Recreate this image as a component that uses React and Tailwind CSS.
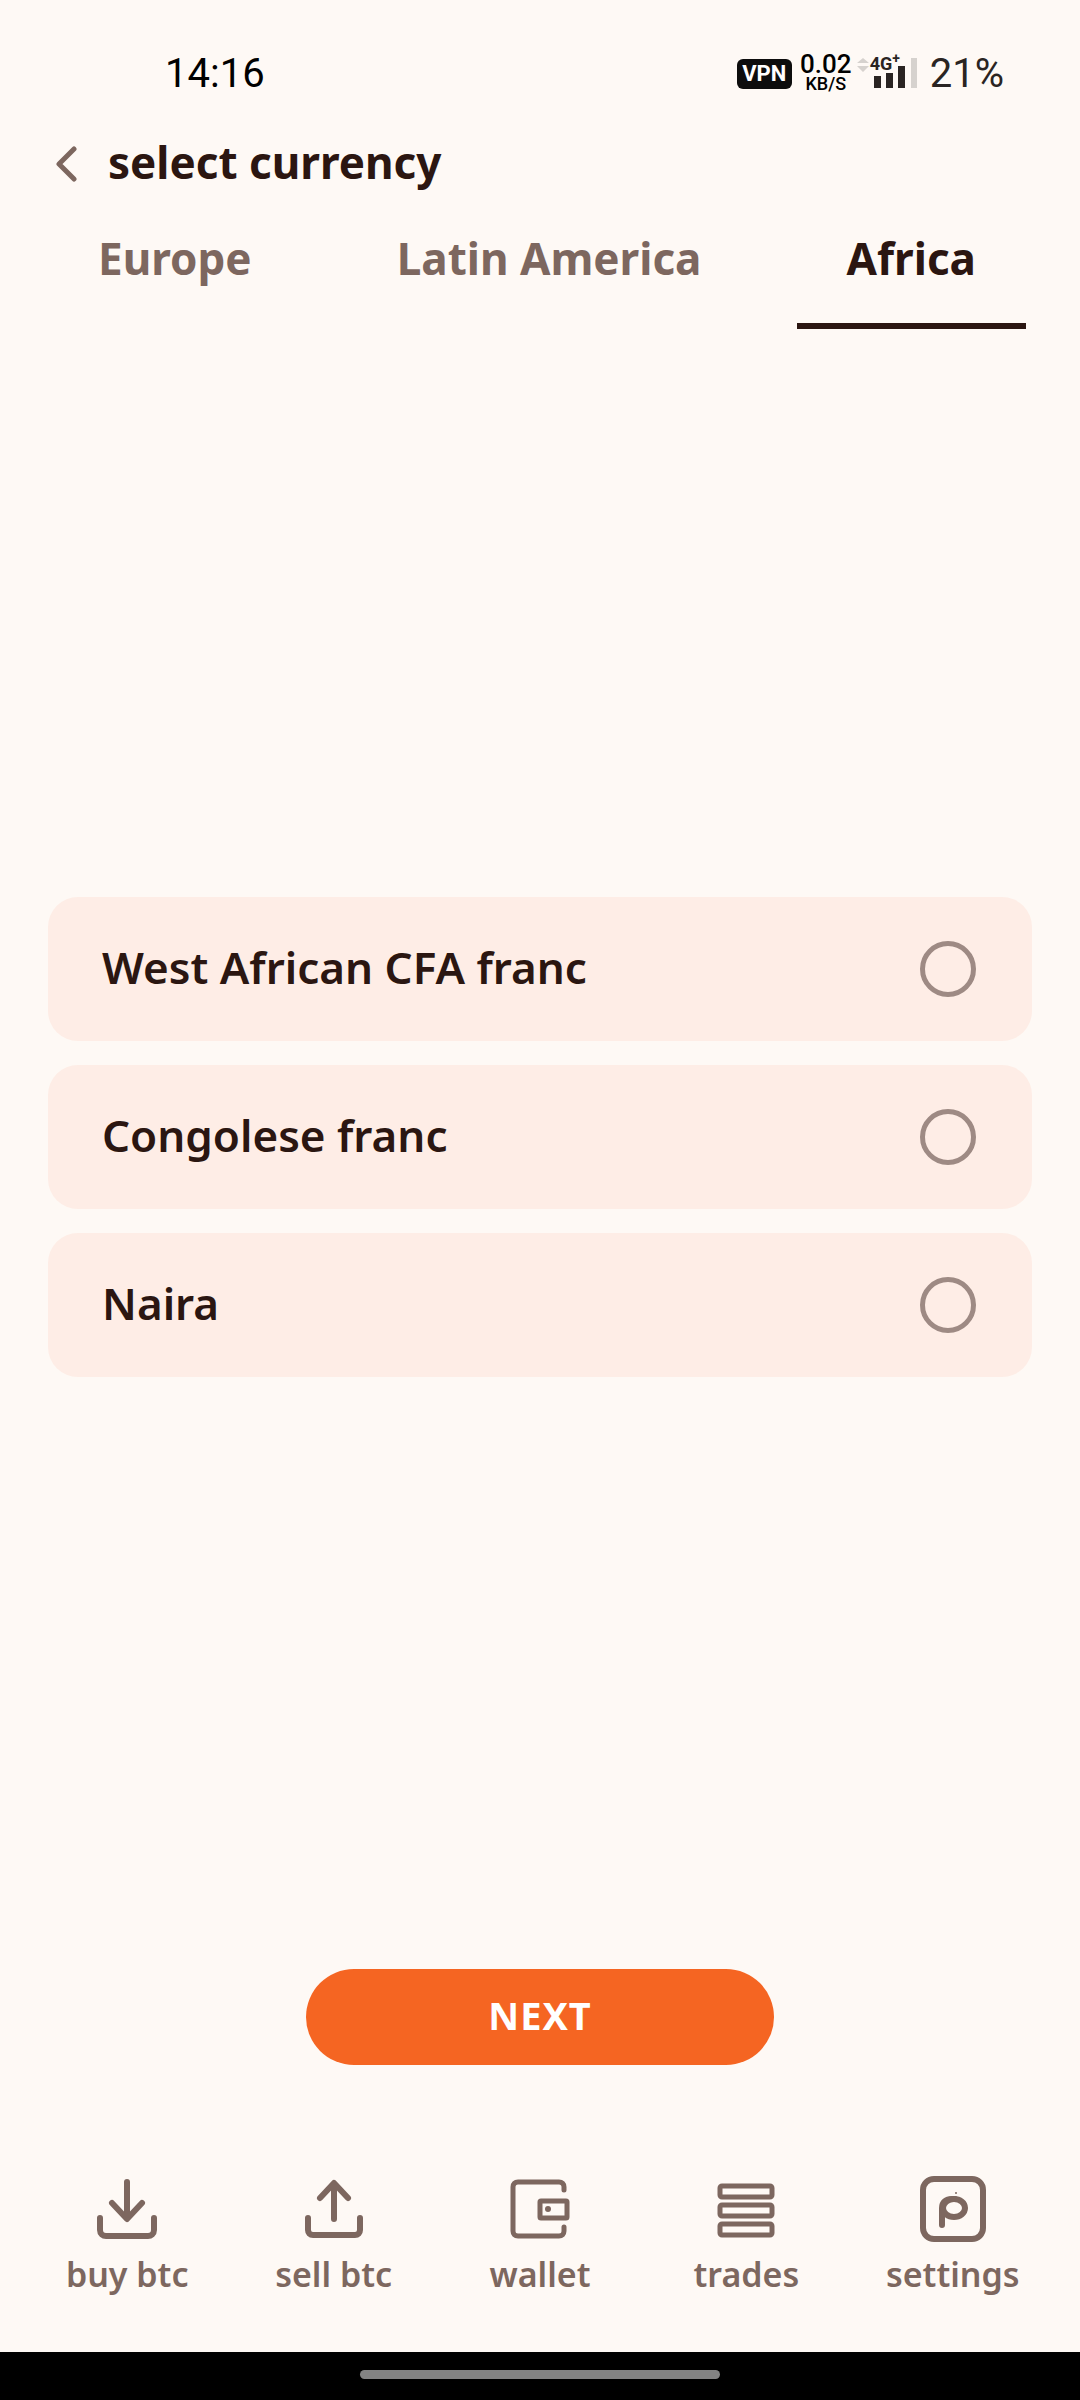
import React, { useState } from "react";
import clsx from "clsx";

const tabs = ["Europe", "Latin America", "Africa"];

const currencies = [
  { code: "XOF", name: "West African CFA franc" },
  { code: "CDF", name: "Congolese franc" },
  { code: "NGN", name: "Naira" },
];

function Icon({ children, width = 6 }) {
  return (
    <svg
      viewBox="0 0 66 66"
      className="size-[66px]"
      fill="none"
      stroke="currentColor"
      strokeWidth={width}
      strokeLinecap="round"
      strokeLinejoin="round"
      aria-hidden="true"
    >
      {children}
    </svg>
  );
}

const navItems = [
  {
    label: "buy btc",
    icon: (
      <Icon>
        <path d="M33 6v36M18 27l15 16 15-16M6 42v12c0 4 3 6 6 6h42c3 0 6-2 6-6V42" />
      </Icon>
    ),
  },
  {
    label: "sell btc",
    icon: (
      <Icon>
        <path d="M33 43V8M19 22L33 7l14 15M7 42v12c0 3 2 5 5 5h42c3 0 5-2 5-5V42" />
      </Icon>
    ),
  },
  {
    label: "wallet",
    icon: (
      <Icon width={5}>
        <path d="M57 14v-3c0-3-2-5-5-5H11c-3 0-5 2-5 5v44c0 3 2 5 5 5h41c3 0 5-2 5-5v-4" />
        <rect x="33" y="25" width="27" height="17" rx="1" />
        <circle cx="41" cy="33" r="3" fill="currentColor" stroke="none" />
      </Icon>
    ),
  },
  {
    label: "trades",
    icon: (
      <Icon width={5}>
        <rect x="7" y="10" width="52" height="11" rx="2" />
        <rect x="7" y="29" width="52" height="11" rx="2" />
        <rect x="7" y="48" width="52" height="11" rx="2" />
      </Icon>
    ),
  },
  {
    label: "settings",
    icon: (
      <Icon>
        <rect x="3" y="3" width="60" height="60" rx="11" />
        <path d="M22 49V32c0-6 4-9 10-9h3" />
        <ellipse cx="34" cy="32" rx="11" ry="9" />
        <circle cx="36" cy="17" r="1" fill="currentColor" stroke="none" />
      </Icon>
    ),
  },
];

function StatusBar() {
  return (
    <div className="flex h-[120px] items-center justify-between pt-7 pr-[76px] pl-[165px] font-[Roboto,sans-serif] text-[40px] leading-none text-black">
      <span>14:16</span>
      <div className="flex items-center">
        <span className="flex h-[30px] w-[55px] items-center justify-center rounded-md bg-[#0d0d0d] text-[22px] font-bold text-white">
          VPN
        </span>
        <span className="ml-2 flex w-[52px] flex-col items-center font-medium">
          <span className="text-[26px] leading-5">0.02</span>
          <span className="text-[18px] leading-5">KB/S</span>
        </span>
        <div className="relative ml-1 h-8 w-[62px]">
          <svg viewBox="0 0 62 32" className="h-8 w-[62px]" aria-hidden="true">
            <path d="M1 5l6-5 6 5zM1 8h12l-6 6z" fill="#d6d2ce" />
            <path d="M18 18h7v12h-7zM30 15h7v15h-7zM42 8h7v22h-7z" fill="#2a2422" />
            <path d="M55 0h6v30h-6z" fill="#d6d2ce" />
          </svg>
          <span className="absolute -top-1 left-[14px] text-[18px] leading-5 font-bold text-[#2a2422]">
            4G<sup className="absolute -top-1 left-full text-[14px] leading-4">+</sup>
          </span>
        </div>
        <span className="ml-3 text-[#2a2422]">21%</span>
      </div>
    </div>
  );
}

function CurrencyOption({ currency, checked, onChange }) {
  return (
    <label className="flex h-36 cursor-pointer items-center justify-between rounded-[30px] bg-[#feede6] pr-14 pl-[54px]">
      <span className="pb-1 text-[44px] leading-[56px] font-semibold">{currency.name}</span>
      <input
        type="radio"
        name="currency"
        value={currency.code}
        checked={checked}
        onChange={onChange}
        className="size-14 appearance-none rounded-full border-[5px] border-[#9e8a84] checked:border-[16px] checked:border-[#f56522]"
      />
    </label>
  );
}

export default function App() {
  const [activeTab, setActiveTab] = useState("Africa");
  const [selected, setSelected] = useState(null);

  return (
    <div className="flex min-h-screen flex-col bg-[#fef9f5] font-['Noto_Sans',sans-serif] text-[#2b1611]">
      <StatusBar />

      <header className="flex h-[88px] items-center gap-[30px] pl-14">
        <button type="button" aria-label="Back" className="text-[#7d675f]">
          <svg viewBox="0 0 22 36" className="h-9 w-[22px]" fill="none" stroke="currentColor" strokeWidth="5" strokeLinecap="round" strokeLinejoin="round">
            <path d="M18 3L3 18l15 15" />
          </svg>
        </button>
        <h1 className="pb-1 text-[44px] leading-[56px] font-bold">select currency</h1>
      </header>

      {/* Region tabs */}
      <div role="tablist" className="flex h-[121px] justify-between pr-[54px] pl-12">
        {tabs.map((tab) => (
          <button
            key={tab}
            type="button"
            role="tab"
            aria-selected={tab === activeTab}
            onClick={() => setActiveTab(tab)}
            className={clsx(
              "border-b-[6px] px-[50px] pb-4 text-[44px] font-bold",
              tab === activeTab ? "border-[#2b1611]" : "border-transparent text-[#7d675f]"
            )}
          >
            {tab}
          </button>
        ))}
      </div>

      <main className="flex flex-1 flex-col justify-center gap-6 px-12">
        {currencies.map((currency) => (
          <CurrencyOption
            key={currency.code}
            currency={currency}
            checked={selected === currency.code}
            onChange={() => setSelected(currency.code)}
          />
        ))}
      </main>

      <div className="flex justify-center pt-6 pb-[111px]">
        <button type="button" className="h-24 w-[468px] rounded-full bg-[#f56522] pb-1 text-[38px] font-bold tracking-wide text-white">
          NEXT
        </button>
      </div>

      <nav className="grid grid-cols-5 px-6 pb-[58px] text-[#7d675f]">
        {navItems.map((item) => (
          <a key={item.label} href="#" className="flex flex-col items-center gap-3 text-[34px] leading-10 font-semibold">
            {item.icon}
            {item.label}
          </a>
        ))}
      </nav>

      {/* System gesture bar */}
      <div className="flex h-12 items-center justify-center bg-black pb-1">
        <div className="h-[9px] w-1/3 rounded-full bg-[#838383]" />
      </div>
    </div>
  );
}
